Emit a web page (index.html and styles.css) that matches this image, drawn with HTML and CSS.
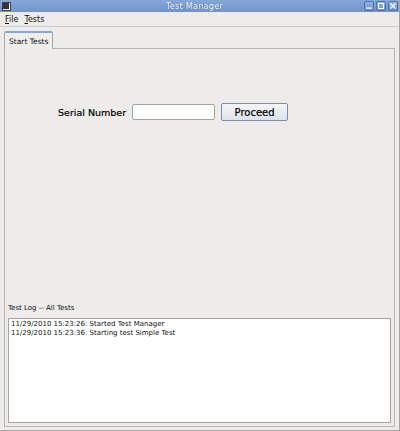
FILE: index.html
```html
<!DOCTYPE html>
<html>
<head>
<meta charset="utf-8">
<title>Test Manager</title>
<link rel="stylesheet" href="styles.css">
</head>
<body>
<div class="window">
  <div class="titlebar">
    <svg class="app-icon" width="9" height="9" viewBox="0 0 9 9">
      <rect x="0.5" y="0.5" width="8" height="8" fill="#eeeeee" stroke="#444"/>
      <rect x="1" y="1" width="6" height="6" fill="#333"/>
    </svg>
    <span class="title">Test Manager</span>
    <div class="wm-buttons">
      <span class="wm-btn"><svg width="8" height="8" viewBox="0 0 8 8"><rect x="1" y="5.5" width="6" height="1.2" fill="#fff"/></svg></span>
      <span class="wm-btn"><svg width="8" height="8" viewBox="0 0 8 8"><rect x="1.5" y="1.5" width="5" height="5" fill="none" stroke="#fff"/></svg></span>
      <span class="wm-btn"><svg width="8" height="8" viewBox="0 0 8 8"><path d="M1.5 1.5L6.5 6.5M6.5 1.5L1.5 6.5" stroke="#fff" stroke-width="1.2"/></svg></span>
    </div>
  </div>
  <div class="menubar">
    <span class="menu"><u>F</u>ile</span>
    <span class="menu"><u>T</u>ests</span>
  </div>
  <div class="content">
    <div class="tabs">
      <span class="tab">Start Tests</span>
    </div>
    <div class="panel">
      <div class="form-area">
        <div class="form-row">
          <label class="field-label" for="serial">Serial Number</label>
          <input class="field-input" id="serial" type="text">
          <button class="btn">Proceed</button>
        </div>
      </div>
      <div class="log-label">Test Log -- All Tests</div>
      <div class="log">
        <div>11/29/2010 15:23:26: Started Test Manager</div>
        <div>11/29/2010 15:23:36: Starting test Simple Test</div>
      </div>
    </div>
  </div>
</div>
</body>
</html>
```
FILE: styles.css
```css
html, body {
  margin: 0;
  padding: 0;
  background: #edeceb;
}

.window {
  width: 399px;
  height: 430px;
  border-right: 1px solid #a8a6a2;
  border-bottom: 1px solid #a8a6a2;
  background: #edeceb;
  display: flex;
  flex-direction: column;
  font-family: "DejaVu Sans", sans-serif;
  color: #111;
}

.titlebar {
  height: 12px;
  background: linear-gradient(#86a8d8, #6f95cc);
  display: flex;
  align-items: center;
  position: relative;
  padding-left: 2px;
}

.app-icon {
  display: block;
}

.title {
  position: absolute;
  left: 0;
  right: 10px;
  text-align: center;
  color: #fff;
  font-size: 8px;
  text-shadow: 0 0 1px #2c4a78;
  letter-spacing: 0.3px;
}

.wm-buttons {
  margin-left: auto;
  display: flex;
  gap: 2px;
  padding-right: 1px;
}

.wm-btn {
  width: 10px;
  height: 10px;
  box-sizing: border-box;
  border: 1px solid #4f74ab;
  border-radius: 2px;
  background: linear-gradient(#94b4e0, #6d92c8);
  display: flex;
  align-items: center;
  justify-content: center;
}

.wm-btn svg {
  display: block;
}

.menubar {
  height: 14px;
  border-bottom: 1px solid #cfccc7;
  display: flex;
  align-items: center;
  padding-left: 5px;
  gap: 6px;
  font-size: 8px;
}

.menu u {
  text-decoration: underline;
}

.content {
  flex: 1;
  display: flex;
  flex-direction: column;
  padding: 4px 4px 3px 4px;
}

.tabs {
  display: flex;
  height: 17px;
}

.tab {
  box-sizing: border-box;
  height: 18px;
  padding: 0 4px;
  border: 1px solid #a9a6a0;
  border-top: 2px solid #86a8d8;
  border-bottom: none;
  border-radius: 2px 2px 0 0;
  background: #efeeec;
  font-size: 7.5px;
  display: flex;
  align-items: center;
  position: relative;
  z-index: 1;
}

.panel {
  flex: 1;
  border: 1px solid #b8b5b0;
  display: flex;
  flex-direction: column;
  padding: 0 3px 3px 3px;
}

.form-area {
  flex: 1;
}

.form-row {
  display: flex;
  align-items: center;
  margin-top: 54px;
  padding-left: 50px;
}

.field-label {
  font-size: 9.5px;
  color: #000;
  margin-right: 6px;
  -webkit-text-stroke: 0.2px #000;
}

.field-input {
  box-sizing: border-box;
  width: 83px;
  height: 16px;
  border: 1px solid #a6a39e;
  border-radius: 2px;
  background: #fff;
  margin: 0 6px 0 0;
  padding: 0;
}

.btn {
  box-sizing: border-box;
  width: 67px;
  height: 18px;
  border: 1px solid #7a8ea8;
  border-radius: 2px;
  background: linear-gradient(#f4f5f7, #dfe3e9);
  font-family: "DejaVu Sans", sans-serif;
  font-size: 10px;
  color: #000;
  -webkit-text-stroke: 0.2px #000;
  padding: 0;
}

.log-label {
  font-size: 7px;
  height: 13px;
  line-height: 13px;
  margin-top: 3px;
  margin-bottom: 3px;
}

.log {
  height: 102px;
  border: 1px solid #a6a39e;
  background: #fff;
  font-size: 7px;
  line-height: 9px;
  padding: 1px 2px 0 2px;
}
```
